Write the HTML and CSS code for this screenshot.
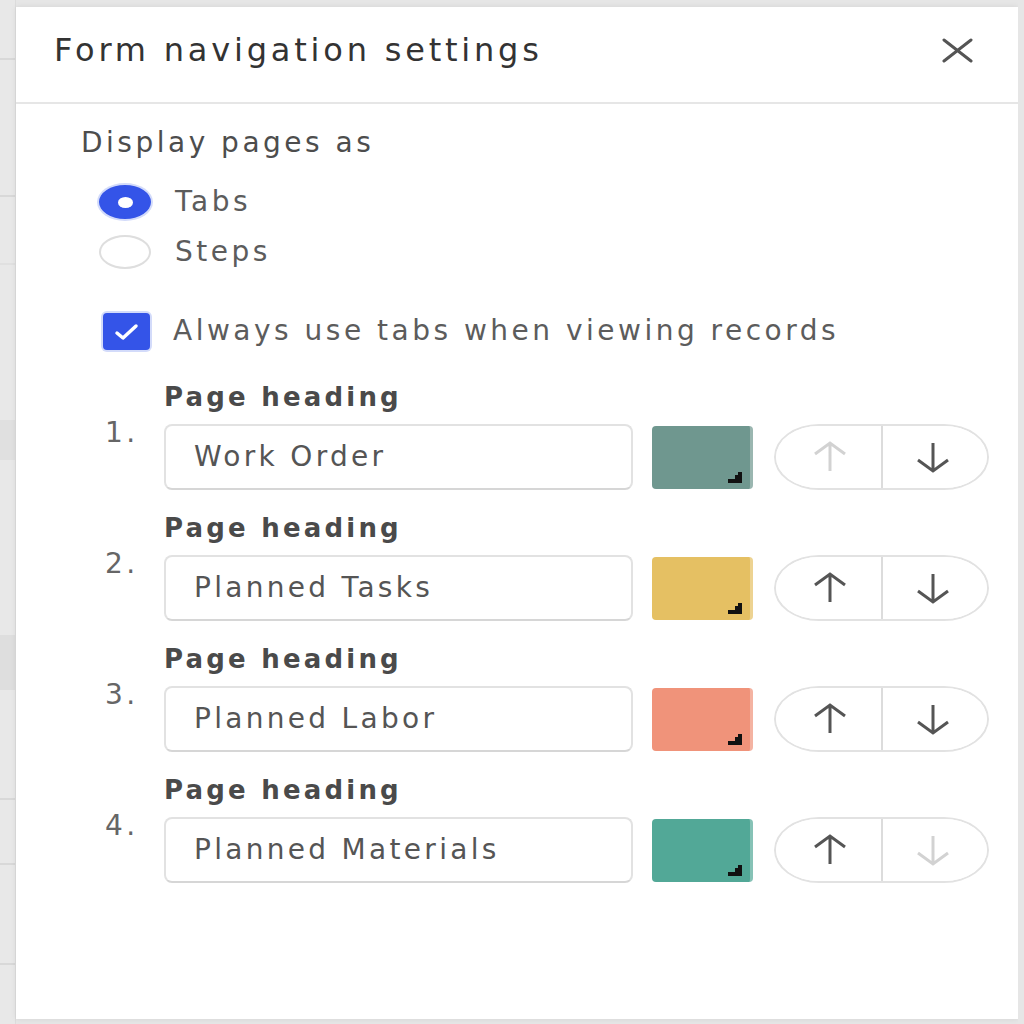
FILE: index.html
```html
<!DOCTYPE html>
<html lang="en">
<head>
<meta charset="utf-8">
<title>Form navigation settings</title>
<link rel="stylesheet" href="styles.css">
</head>
<body>
<div class="screen">
  <div class="backdrop">
    <div class="bd bd-a"></div>
    <div class="bd bd-b"></div>
    <div class="bd bd-c"></div>
    <div class="bd bd-d"></div>
    <div class="bd bd-e"></div>
    <div class="bd bd-f"></div>
    <div class="bd bd-g"></div>
    <div class="bd bd-h"></div>
    <div class="bd bd-i"></div>
    <div class="bd bd-j"></div>
  </div>
  <section class="panel">
    <header class="panel-header">
      <h1 class="panel-title">Form navigation settings</h1>
      <button class="close-btn" aria-label="Close">
        <svg width="35" height="25" viewBox="0 0 35 25"><path d="M4 2 L31 23 M31 2 L4 23" fill="none" stroke="#555" stroke-width="3" stroke-linecap="round"/></svg>
      </button>
    </header>
    <div class="panel-body">
      <div class="field-label">Display pages as</div>
      <div class="radio-group">
        <label class="radio-row"><span class="radio checked"><span class="dot"></span></span><span class="opt-text">Tabs</span></label>
        <label class="radio-row"><span class="radio"></span><span class="opt-text">Steps</span></label>
      </div>
      <label class="check-row">
        <span class="checkbox"><svg width="47" height="37" viewBox="0 0 47 37"><path d="M14 20 L20 25 L33 13" fill="none" stroke="#fff" stroke-width="3.5" stroke-linecap="round" stroke-linejoin="round"/></svg></span>
        <span class="opt-text">Always use tabs when viewing records</span>
      </label>
      <ol class="pages">
        <li class="page-row">
          <span class="num">1.</span>
          <span class="page-label">Page heading</span>
          <div class="controls">
            <div class="text-input">Work Order</div>
            <div class="swatch swatch-sage"><svg class="grip" width="14" height="11" viewBox="0 0 14 11"><path d="M14 0 V11 H0 V7 H7 V3 H10 V0 Z" fill="#111"/></svg></div>
            <div class="move-group">
              <button class="move move-up is-disabled" aria-label="Move up"><svg width="38" height="34" viewBox="0 0 38 34"><path d="M19 31 V3 M4 14 L19 3 L34 14" fill="none" stroke="currentColor" stroke-width="3"/></svg></button>
              <button class="move move-down" aria-label="Move down"><svg width="38" height="34" viewBox="0 0 38 34"><path d="M19 3 V31 M4 20 L19 31 L34 20" fill="none" stroke="currentColor" stroke-width="3"/></svg></button>
            </div>
          </div>
        </li>
        <li class="page-row">
          <span class="num">2.</span>
          <span class="page-label">Page heading</span>
          <div class="controls">
            <div class="text-input">Planned Tasks</div>
            <div class="swatch swatch-yellow"><svg class="grip" width="14" height="11" viewBox="0 0 14 11"><path d="M14 0 V11 H0 V7 H7 V3 H10 V0 Z" fill="#111"/></svg></div>
            <div class="move-group">
              <button class="move move-up" aria-label="Move up"><svg width="38" height="34" viewBox="0 0 38 34"><path d="M19 31 V3 M4 14 L19 3 L34 14" fill="none" stroke="currentColor" stroke-width="3"/></svg></button>
              <button class="move move-down" aria-label="Move down"><svg width="38" height="34" viewBox="0 0 38 34"><path d="M19 3 V31 M4 20 L19 31 L34 20" fill="none" stroke="currentColor" stroke-width="3"/></svg></button>
            </div>
          </div>
        </li>
        <li class="page-row">
          <span class="num">3.</span>
          <span class="page-label">Page heading</span>
          <div class="controls">
            <div class="text-input">Planned Labor</div>
            <div class="swatch swatch-salmon"><svg class="grip" width="14" height="11" viewBox="0 0 14 11"><path d="M14 0 V11 H0 V7 H7 V3 H10 V0 Z" fill="#111"/></svg></div>
            <div class="move-group">
              <button class="move move-up" aria-label="Move up"><svg width="38" height="34" viewBox="0 0 38 34"><path d="M19 31 V3 M4 14 L19 3 L34 14" fill="none" stroke="currentColor" stroke-width="3"/></svg></button>
              <button class="move move-down" aria-label="Move down"><svg width="38" height="34" viewBox="0 0 38 34"><path d="M19 3 V31 M4 20 L19 31 L34 20" fill="none" stroke="currentColor" stroke-width="3"/></svg></button>
            </div>
          </div>
        </li>
        <li class="page-row">
          <span class="num">4.</span>
          <span class="page-label">Page heading</span>
          <div class="controls">
            <div class="text-input">Planned Materials</div>
            <div class="swatch swatch-teal"><svg class="grip" width="14" height="11" viewBox="0 0 14 11"><path d="M14 0 V11 H0 V7 H7 V3 H10 V0 Z" fill="#111"/></svg></div>
            <div class="move-group">
              <button class="move move-up" aria-label="Move up"><svg width="38" height="34" viewBox="0 0 38 34"><path d="M19 31 V3 M4 14 L19 3 L34 14" fill="none" stroke="currentColor" stroke-width="3"/></svg></button>
              <button class="move move-down is-disabled" aria-label="Move down"><svg width="38" height="34" viewBox="0 0 38 34"><path d="M19 3 V31 M4 20 L19 31 L34 20" fill="none" stroke="currentColor" stroke-width="3"/></svg></button>
            </div>
          </div>
        </li>
      </ol>
    </div>
  </section>
  <div class="right-edge"></div>
</div>
</body>
</html>
```
FILE: styles.css
```css
* { box-sizing: border-box; margin: 0; padding: 0; }

html, body {
  width: 1024px;
  height: 1024px;
  overflow: hidden;
}

body {
  background: #e6e6e6;
  font-family: "DejaVu Sans", "Liberation Sans", sans-serif;
  color: #555;
}

.screen {
  display: flex;
  height: 1024px;
}

/* grey table behind the panel */
.backdrop {
  width: 16px;
  flex: none;
  display: flex;
  flex-direction: column;
  background: #e8e8e8;
  border-right: 1px solid #dcdcdc;
}
.bd { border-bottom: 2px solid #d8d8d8; flex: none; }
.bd-a { height: 60px; }
.bd-b { height: 137px; }
.bd-c { height: 68px; border-bottom-color: #e0e0e0; }
.bd-d { height: 155px; border-bottom: none; }
.bd-e { height: 40px; background: #e0e0e0; border-bottom: none; }
.bd-f { height: 175px; border-bottom: none; }
.bd-g { height: 55px; background: #dedede; border-bottom: none; }
.bd-h { height: 110px; }
.bd-i { height: 65px; }
.bd-j { height: 100px; }

.right-edge {
  flex: 1;
  background: #e6e6e6;
}

.panel {
  width: 1002px;
  flex: none;
  margin: 7px 0 5px 0;
  background: #fff;
  box-shadow: 0 0 6px rgba(0, 0, 0, 0.08);
  display: flex;
  flex-direction: column;
}

.panel-header {
  height: 97px;
  flex: none;
  display: flex;
  justify-content: space-between;
  align-items: flex-start;
  padding: 23px 43px 0 38px;
  border-bottom: 2px solid #e6e6e6;
}

.panel-title {
  font-size: 32px;
  line-height: 40px;
  font-weight: normal;
  letter-spacing: 3.8px;
  color: #333;
}

.close-btn {
  background: none;
  border: none;
  height: 40px;
  width: 35px;
  display: flex;
  align-items: center;
  justify-content: center;
}

.panel-body {
  padding: 22px 28px 0 65px;
}

.field-label {
  font-size: 28px;
  line-height: 34px;
  letter-spacing: 3.5px;
  color: #4d4d4d;
}

.radio-group {
  margin-top: 17px;
  display: flex;
  flex-direction: column;
}

.radio-row {
  height: 50px;
  display: flex;
  align-items: center;
  padding-left: 18px;
  gap: 24px;
}

.radio {
  width: 52px;
  height: 34px;
  flex: none;
  border-radius: 50%;
  border: 2px solid #dedede;
  display: flex;
  align-items: center;
  justify-content: center;
}

.radio.checked {
  background: #3454e8;
  border-color: #3454e8;
  box-shadow: 0 0 0 2px #d3dbfa;
}

.dot {
  width: 15px;
  height: 11px;
  border-radius: 50%;
  background: #fff;
}

.opt-text {
  font-size: 28px;
  line-height: 34px;
  letter-spacing: 3.5px;
  color: #5c5c5c;
}

.check-row {
  margin-top: 29px;
  height: 50px;
  display: flex;
  align-items: center;
  padding-left: 22px;
  gap: 23px;
}

.checkbox {
  width: 47px;
  height: 37px;
  flex: none;
  border-radius: 4px;
  background: #3454e8;
  box-shadow: 0 0 0 2px #d3dbfa;
  display: flex;
}

.pages {
  list-style: none;
  margin-top: 24px;
  padding-left: 24px;
}

.page-row {
  display: grid;
  grid-template-columns: 59px 1fr;
  grid-template-rows: 34px auto;
  row-gap: 10px;
  margin-bottom: 21px;
}

.num {
  grid-column: 1;
  grid-row: 1 / span 2;
  padding-top: 36px;
  font-size: 28px;
  line-height: 34px;
  letter-spacing: 3.4px;
  color: #666;
}

.page-label {
  grid-column: 2;
  grid-row: 1;
  font-size: 26px;
  line-height: 34px;
  font-weight: bold;
  letter-spacing: 3.2px;
  color: #4a4a4a;
}

.controls {
  grid-column: 2;
  grid-row: 2;
  display: flex;
  align-items: center;
}

.text-input {
  width: 469px;
  height: 66px;
  border: 2px solid #e2e2e2;
  border-bottom-color: #d6d6d6;
  border-radius: 8px;
  padding-left: 28px;
  font-size: 28px;
  line-height: 62px;
  letter-spacing: 3.3px;
  color: #555;
}

.swatch {
  position: relative;
  width: 101px;
  height: 63px;
  margin-left: 19px;
  border-radius: 4px;
  border-right: 3px solid rgba(255, 255, 255, 0.3);
}
.swatch-sage { background: #6f978f; }
.swatch-yellow { background: #e5c063; }
.swatch-salmon { background: #f0937a; }
.swatch-teal { background: #52a897; }

.grip {
  position: absolute;
  right: 8px;
  bottom: 6px;
}

.move-group {
  width: 215px;
  height: 66px;
  margin-left: 21px;
  border: 2px solid #e2e2e2;
  border-radius: 45px / 33px;
  display: flex;
  overflow: hidden;
}

.move {
  flex: 1;
  background: #fff;
  border: none;
  display: flex;
  align-items: center;
  justify-content: center;
  color: #555;
}

.move-up {
  border-right: 2px solid #dcdcdc;
  padding-left: 4px;
}
.move-down { padding-right: 4px; }

.move.is-disabled { color: #d2d2d2; }
```
